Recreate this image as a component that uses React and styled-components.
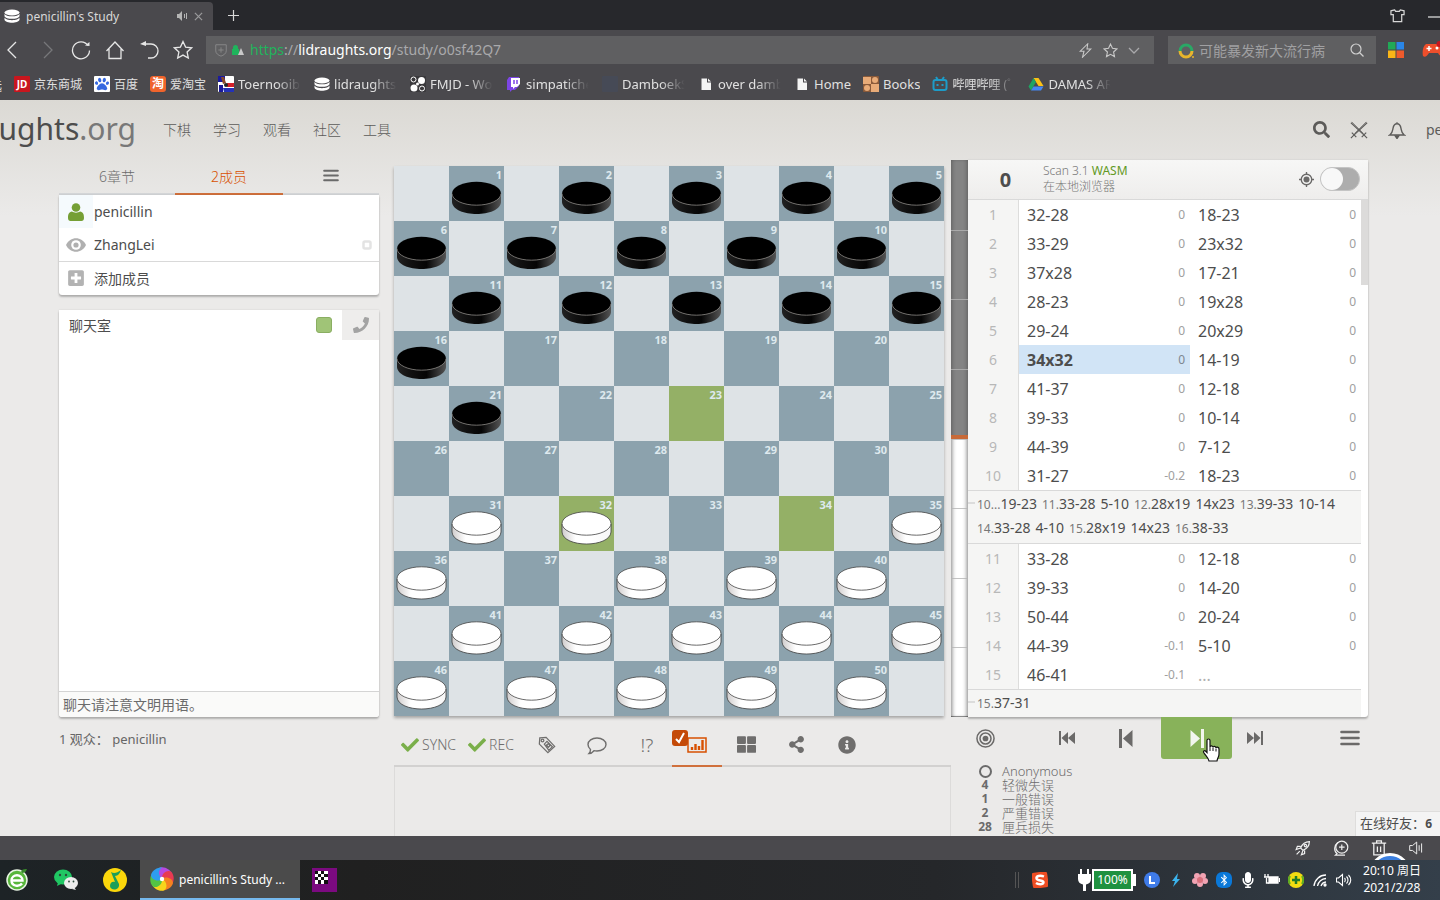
import React from 'react';
import { createGlobalStyle, styled } from 'styled-components';
import {
  FaBluetoothB,
  FaCheck,
  FaInfoCircle,
  FaMicrophone,
  FaPhone,
  FaPlusSquare,
  FaSearch,
  FaShareAlt,
  FaThLarge,
  FaPaw,
} from 'react-icons/fa';

const GlobalStyles = createGlobalStyle`
  * {
    box-sizing: border-box;
  }
  body {
    margin: 0;
    color: #4d4d4d;
    font-family: "Noto Sans", "Noto Sans CJK SC", sans-serif;
    font-size: 14px;
  }
  button {
    padding: 0;
    border: none;
    background: none;
    color: inherit;
    font: inherit;
    cursor: pointer;
  }
  input {
    font: inherit;
  }
  a {
    color: inherit;
    text-decoration: none;
  }
  svg {
    display: block;
    flex-shrink: 0;
  }
`;

const Desktop = styled.div`
  height: 100vh;
  display: flex;
  flex-direction: column;
  overflow: hidden;
`;

/* ---------- browser ---------- */

const TabStrip = styled.div`
  height: 30px;
  display: flex;
  align-items: center;
  flex-shrink: 0;
  background-color: #27282c;
  color: #d8d8d8;
`;

const BrowserTab = styled.div`
  width: 213px;
  height: 28px;
  margin-top: 2px;
  padding: 0 10px 0 4px;
  display: flex;
  align-items: center;
  gap: 6px;
  border-radius: 0 4px 0 0;
  background-color: #4a494d;
  font-size: 12px;
  .title {
    flex: 1;
  }
`;

const NewTab = styled.button`
  margin-left: 14px;
`;

const WindowButtons = styled.div`
  margin-left: auto;
  display: flex;
  align-items: center;
  gap: 20px;
`;

const Toolbar = styled.div`
  height: 40px;
  display: flex;
  align-items: center;
  flex-shrink: 0;
  background-color: #4a494d;
  color: #e6e6e6;
`;

const NavButtons = styled.div`
  padding: 0 13px 0 3px;
  display: flex;
  align-items: center;
  gap: 14px;
`;

const Address = styled.div`
  height: 28px;
  flex: 1;
  padding: 0 14px 0 8px;
  display: flex;
  align-items: center;
  gap: 4px;
  background-color: #5f5f61;
  color: #a9a9ab;
  .url {
    flex: 1;
    margin-left: 2px;
    padding-bottom: 2px;
  }
  .url ~ svg + svg {
    margin-left: 6px;
  }
  .scheme {
    color: #1fb45c;
  }
  .host {
    color: #fff;
  }
`;

const SearchBox = styled.label`
  width: 208px;
  height: 28px;
  margin: 0 12px 0 14px;
  padding: 0 12px 0 10px;
  display: flex;
  align-items: center;
  gap: 4px;
  background-color: #5f5f61;
  input {
    min-width: 0;
    flex: 1;
    padding: 0;
    border: none;
    outline: none;
    background: none;
    color: #fff;
    font-size: 14px;
  }
  input::placeholder {
    color: #a0a0a2;
    opacity: 1;
  }
`;

const Extensions = styled.div`
  width: 52px;
  display: flex;
  align-items: center;
  gap: 17px;
  overflow: hidden;
`;

const Bookmarks = styled.nav`
  height: 30px;
  padding-bottom: 2px;
  display: flex;
  align-items: center;
  flex-shrink: 0;
  gap: 12px;
  overflow: hidden;
  background-color: #4a494d;
  color: #e0e0e0;
  font-size: 13px;
`;

const Bookmark = styled.a`
  display: flex;
  align-items: center;
  flex-shrink: 0;
  gap: 4px;
  font-size: ${(props) => (props.$chinese ? 12 : 13)}px;
  span {
    max-width: 64px;
    overflow: hidden;
    white-space: nowrap;
    mask-image: ${(props) => (props.$fade ? 'linear-gradient(90deg, #000 60%, transparent 98%)' : 'none')};
  }
`;

const CutBookmark = styled.a`
  width: 2px;
  display: flex;
  justify-content: flex-end;
  flex-shrink: 0;
  overflow: hidden;
  white-space: nowrap;
`;

const StatusBar = styled.div`
  height: 24px;
  padding-right: 17px;
  position: relative;
  display: flex;
  align-items: center;
  justify-content: flex-end;
  flex-shrink: 0;
  gap: 22px;
  overflow: hidden;
  background-color: #4a494d;
  color: #f0f0f0;
`;

const FloatingBall = styled.div`
  width: 42px;
  height: 42px;
  position: absolute;
  top: 17px;
  right: 29px;
  border: 3px solid #fff;
  border-radius: 50%;
  background-color: #3b7fe0;
`;

/* ---------- site ---------- */

const Page = styled.div`
  min-height: 0;
  flex: 1;
  display: flex;
  flex-direction: column;
  position: relative;
  overflow: hidden;
  background: linear-gradient(#dbd9d4, #ebeae9 116px);
`;

const SiteHeader = styled.header`
  height: 60px;
  padding-bottom: 1px;
  display: flex;
  align-items: center;
  flex-shrink: 0;
  color: #5c5b59;
`;

const Brand = styled.a`
  width: 136px;
  margin-right: 27px;
  padding-bottom: 2px;
  display: flex;
  justify-content: flex-end;
  flex-shrink: 0;
  overflow: hidden;
  color: #4d4d4d;
  font-size: 30px;
  line-height: 44px;
  span {
    color: #787878;
  }
`;

const SiteNav = styled.nav`
  flex: 1;
  padding-bottom: 2px;
  display: flex;
  gap: 22px;
  font-weight: 300;
`;

const SiteTools = styled.div`
  width: 127px;
  display: flex;
  align-items: center;
  gap: 20px;
  overflow: hidden;
`;

const Main = styled.main`
  min-height: 0;
  flex: 1;
  padding: 0 72px 0 59px;
  display: grid;
  grid-template-columns: 335fr 557fr 417fr;
  grid-template-rows: auto minmax(0, 1fr);
`;

const Side = styled.aside`
  padding-right: 15px;
  display: flex;
  flex-direction: column;
`;

const SideTabs = styled.div`
  height: 35px;
  display: grid;
  grid-template-columns: 116fr 108fr 96fr;
`;

const SideTab = styled.button`
  padding-bottom: 2px;
  display: flex;
  align-items: center;
  justify-content: center;
  border-bottom: 2px solid ${(props) => (props.$active ? '#d0703c' : '#d4d6d8')};
  color: ${(props) => (props.$active ? '#d85000' : '#6a6a6a')};
  font-weight: 300;
`;

const Card = styled.section`
  border-radius: 0 0 3px 3px;
  background-color: #fff;
  box-shadow: 0 2px 2px rgba(0, 0, 0, 0.24), 0 0 2px rgba(0, 0, 0, 0.12);
`;

const Member = styled.div`
  height: 33px;
  padding-right: 7px;
  display: flex;
  align-items: center;
  color: #4d4d4d;
  .status {
    width: 34px;
    height: 33px;
    display: flex;
    align-items: center;
    justify-content: center;
    background-color: ${(props) => (props.$self ? '#f5fafd' : 'transparent')};
    color: ${(props) => (props.$self ? '#759f35' : '#b0b0b0')};
  }
  .name {
    flex: 1;
    margin-left: 1px;
  }
`;

const AddMember = styled.button`
  width: 100%;
  height: 34px;
  padding: 0 0 2px 8px;
  display: flex;
  align-items: center;
  gap: 9px;
  border-top: 1px solid #d9d9d9;
  svg {
    color: #b3b3b3;
  }
`;

const Chat = styled(Card)`
  flex: 1;
  margin-top: 15px;
  display: flex;
  flex-direction: column;
`;

const ChatHead = styled.div`
  height: 30px;
  padding-left: 10px;
  display: flex;
  align-items: center;
  label {
    flex: 1;
    display: flex;
    align-items: center;
    justify-content: space-between;
  }
  input {
    width: 16px;
    height: 16px;
    margin: 0 10px;
    appearance: none;
    border: 1px solid #8aae62;
    border-radius: 3px;
    background-color: #a0c477;
  }
`;

const VoiceButton = styled.button`
  width: 37px;
  height: 30px;
  display: flex;
  align-items: center;
  justify-content: center;
  background-color: #eeedec;
  color: #a3a3a3;
`;

const ChatInput = styled.input`
  width: 100%;
  height: 26px;
  margin-top: auto;
  padding: 0 4px;
  border: none;
  border-top: 1px solid #d4d4d4;
  border-radius: 0 0 3px 3px;
  outline: none;
  background-color: #fafaf9;
  &::placeholder {
    color: #6b6b6b;
    opacity: 1;
  }
`;

const BoardWrap = styled.div`
  padding: 6px 7px 1px 0;
`;

const Board = styled.div`
  aspect-ratio: 1;
  display: grid;
  grid-template-columns: repeat(10, 1fr);
  grid-template-rows: repeat(10, 1fr);
  box-shadow: 0 2px 3px rgba(0, 0, 0, 0.3);
`;

const Square = styled.div`
  min-height: 0;
  position: relative;
  background-color: ${(props) => (props.$last ? '#94b066' : props.$dark ? '#8ca2ad' : '#dee3e6')};
  .number {
    position: absolute;
    top: 2px;
    right: 2px;
    color: #dee9ee;
    font-size: 11px;
    font-weight: bold;
    line-height: 14px;
  }
`;

const Analysis = styled.div`
  min-width: 0;
  display: flex;
`;

const Gauge = styled.div`
  width: 17px;
  display: flex;
  flex-direction: column;
  position: relative;
  flex-shrink: 0;
  background-color: #fff;
  box-shadow: inset 3px 0 4px -2px rgba(0, 0, 0, 0.5), inset -3px 0 4px -2px rgba(0, 0, 0, 0.5), inset 0 -1px 0 #a0a0a0;
  .black {
    height: 50%;
    border-bottom: 4px solid #c86a38;
    background-color: rgba(80, 80, 80, 0.7);
  }
  .ticks {
    position: absolute;
    inset: 0;
    display: grid;
    grid-template-rows: repeat(8, 1fr);
  }
  .ticks i + i {
    border-top: 1px solid rgba(180, 180, 180, 0.8);
  }
`;

const Panel = styled.section`
  min-width: 0;
  flex: 1;
  background-color: #fff;
  border-radius: 0 0 3px 0;
  box-shadow: 0 2px 2px rgba(0, 0, 0, 0.24), 0 0 2px rgba(0, 0, 0, 0.12);
`;

const Engine = styled.div`
  height: 40px;
  padding-right: 8px;
  display: flex;
  align-items: center;
  border-bottom: 1px solid #d9d9d9;
  background: linear-gradient(#f7f7f6, #eeedec);
  .score {
    width: 75px;
    padding-bottom: 1px;
    text-align: center;
    font-size: 20px;
    font-weight: bold;
  }
  .name {
    flex: 1;
    padding-bottom: 2px;
    color: #787878;
    font-size: 12px;
    font-weight: 300;
    line-height: 16px;
  }
  .name b {
    color: #629924;
    font-weight: 400;
  }
`;

const Switch = styled.input`
  width: 40px;
  height: 24px;
  margin: 0 0 1px 6px;
  appearance: none;
  display: flex;
  border: 1px solid #c4c4c4;
  border-radius: 12px;
  background-color: #adadad;
  &::before {
    content: '';
    width: 22px;
    height: 22px;
    border-radius: 50%;
    background-color: #f8f8f8;
  }
`;

const MoveArea = styled.div`
  display: flex;
`;

const Scrollbar = styled.div`
  width: 7px;
  flex-shrink: 0;
  div {
    height: 85px;
    background-color: #dcdbda;
  }
`;

const Moves = styled.table`
  width: 100%;
  min-width: 0;
  flex: 1;
  table-layout: fixed;
  border-spacing: 0;
  col.index {
    width: 51px;
  }
  th {
    height: 29px;
    padding: 0;
    border-right: 1px solid #dddddc;
    background-color: #f5f5f4;
    color: #b8b8b8;
    font-weight: 400;
    text-align: center;
  }
  td {
    padding: 0;
  }
`;

const Move = styled.div`
  height: 29px;
  padding: 0 5px 0 8px;
  display: flex;
  align-items: center;
  justify-content: space-between;
  background-color: ${(props) => (props.$active ? '#d1e4f6' : 'transparent')};
  font-size: 16px;
  font-weight: ${(props) => (props.$active ? 700 : 400)};
  em {
    color: ${(props) => (props.$active ? '#7d8790' : '#a0a0a0')};
    font-size: 12px;
    font-style: normal;
    font-weight: 400;
  }
  &.empty {
    color: #b0b0b0;
  }
`;

const Variation = styled.div`
  padding: ${(props) => (props.$last ? '1px 9px 2px' : '1px 9px 3px')};
  display: flex;
  flex-wrap: wrap;
  column-gap: 5px;
  position: relative;
  border-top: 1px solid #d9d9d9;
  border-bottom: ${(props) => (props.$last ? 'none' : '1px solid #d9d9d9')};
  background-color: #f5f5f4;
  line-height: 24px;
  small {
    color: #787878;
    font-size: 12px;
    line-height: 16px;
  }
  &::before {
    content: '';
    width: 7px;
    position: absolute;
    top: 11px;
    left: 0;
    border-top: 2px solid #dcdcdc;
  }
`;

const Spectators = styled.div`
  padding-top: 12px;
  font-size: 13px;
  line-height: 20px;
  color: #666;
`;

const Under = styled.div`
  min-height: 0;
  padding-top: 7px;
  display: flex;
  flex-direction: column;
`;

const StudyTools = styled.div`
  height: 43px;
  padding-left: 7px;
  display: flex;
  flex-shrink: 0;
  border-bottom: 2px solid #d2d1d0;
  color: #6f6e6d;
`;

const SyncButton = styled.button`
  margin-right: ${(props) => props.$gap}px;
  display: flex;
  align-items: center;
  gap: 3px;
  font-weight: 300;
  svg {
    color: #7aaf4a;
  }
`;

const StudyTab = styled.button`
  width: 50px;
  margin-bottom: -2px;
  position: relative;
  display: flex;
  align-items: center;
  justify-content: center;
  border-bottom: 2px solid ${(props) => (props.$active ? '#d0703c' : 'transparent')};
  color: ${(props) => (props.$active ? '#d85000' : 'inherit')};
  font-size: 19px;
  font-weight: 300;
`;

const EvalBadge = styled.label`
  width: 16px;
  height: 16px;
  position: absolute;
  top: 6px;
  left: 0;
  display: grid;
  place-items: center;
  border-radius: 3px;
  background-color: #c44a08;
  color: #fff;
  input {
    width: 16px;
    height: 16px;
    margin: 0;
    grid-area: 1 / 1;
    appearance: none;
  }
  svg {
    grid-area: 1 / 1;
  }
`;

const UnderBox = styled.div`
  flex: 1;
  border-left: 1px solid #dcdbda;
  border-right: 1px solid #dcdbda;
`;

const ControlSide = styled.div`
  min-width: 0;
  padding-left: 17px;
`;

const Controls = styled.div`
  height: 42px;
  display: flex;
  align-items: stretch;
  justify-content: space-between;
  color: #6b6a69;
`;

const Jumps = styled.div`
  margin-right: 12px;
  display: flex;
`;

const ControlButton = styled.button`
  width: ${(props) => props.$width}px;
  position: relative;
  display: flex;
  align-items: center;
  justify-content: center;
  border-radius: 0 0 3px 3px;
  background-color: ${(props) => (props.$hover ? '#88b25a' : 'transparent')};
  color: ${(props) => (props.$hover ? '#f2f6ee' : 'inherit')};
`;

const Pointer = styled.svg`
  position: absolute;
  top: 21px;
  right: 12px;
`;

const Advice = styled.dl`
  margin: 5px 0 0;
  display: grid;
  grid-template-columns: 34px 1fr;
  color: #6b6b6b;
  font-size: 13px;
  line-height: 14px;
  dt {
    display: flex;
    align-items: center;
    justify-content: center;
    font-size: 12px;
    font-weight: bold;
  }
  dd {
    margin: 0;
    font-weight: 300;
  }
`;

const Friends = styled.button`
  height: 25px;
  padding: 0 8px 3px 4px;
  position: absolute;
  right: 0;
  bottom: 0;
  border: 1px solid #dedddc;
  border-width: 1px 0 0 1px;
  background-color: #f4f4f4;
  font-size: 13px;
  b {
    font-size: 12px;
  }
`;

/* ---------- taskbar ---------- */

const Taskbar = styled.footer`
  height: 40px;
  display: flex;
  align-items: center;
  flex-shrink: 0;
  background: linear-gradient(90deg, #1d2326, #202020 25%, #25272a 65%, #343f4a);
  color: #fff;
  font-size: 12px;
`;

const Pinned = styled.div`
  width: 140px;
  padding-left: 5px;
  display: flex;
  gap: 25px;
`;

const RunningApp = styled.button`
  width: 160px;
  height: 40px;
  margin-right: 12px;
  padding-left: 10px;
  display: flex;
  align-items: center;
  gap: 5px;
  border-bottom: 2px solid #76b9ed;
  background-color: #4b4b4b;
`;

const Tray = styled.div`
  margin-left: auto;
  padding-right: 16px;
  display: flex;
  align-items: center;
  gap: 8px;
  .grip {
    width: 4px;
    height: 16px;
    margin-right: 5px;
    border: 1px solid #555;
    border-width: 0 1px;
  }
`;

const Power = styled.div`
  margin-left: 21px;
  display: flex;
  align-items: center;
  .level {
    width: 41px;
    height: 22px;
    border: 2px solid #fff;
    background-color: #1f9140;
    line-height: 18px;
    text-align: center;
  }
  .cap {
    width: 3px;
    height: 12px;
    background-color: #fff;
  }
`;

const Clock = styled.time`
  width: 64px;
  padding-bottom: 2px;
  line-height: 17px;
  text-align: center;
`;

/* ---------- drawings ---------- */

const Line = ({ size = 20, view = 20, w = 1.3, children, ...rest }) => (
  <svg width={size} height={size} viewBox={`0 0 ${view} ${view}`} fill="none" stroke="currentColor" strokeWidth={w} {...rest}>
    {children}
  </svg>
);

const Stack = ({ size = 16 }) => (
  <svg width={size} height={size} viewBox="0 0 16 16" fill="#fff">
    <ellipse cx="8" cy="4.5" rx="7.5" ry="3" />
    <path d="M.5 5.8c1 3.4 14 3.4 15 0v2.4c-1 3.4-14 3.4-15 0z" />
    <path d="M.5 9.6c1 3.4 14 3.4 15 0v2.2c-1 4-14 4-15 0z" />
  </svg>
);

const STAR = 'M10 1.5l2.6 5.6 6 .7-4.500 4.200 1.200 6.100-5.300-3-5.300 3 1.200-6.100L1.400 7.800l6-.7z';

const Speaker = ({ size }) => (
  <Line size={size} w={1.4}>
    <path d="M1 6.500h4l6-5v17l-6-5H1z" />
    <path d="M14.500 6v8M18 3.500v13" />
  </Line>
);

const Bars = ({ width, height }) => (
  <svg width={width} height={height} viewBox="0 0 20 16" fill="none" stroke="currentColor" strokeWidth="2.600" strokeLinecap="round">
    <path d="M1.500 2h17M1.500 8h17M1.500 14h17" />
  </svg>
);

const Target = ({ size }) => (
  <Line size={size} w={1.6}>
    <circle cx="10" cy="10" r="9" />
    <circle cx="10" cy="10" r="5.800" />
    <circle cx="10" cy="10" r="3" fill="currentColor" stroke="none" />
  </Line>
);

const Badge = ({ color, radius = 1, children }) => (
  <svg width="16" height="16" viewBox="0 0 16 16">
    <rect width="16" height="16" rx={radius} fill={color} />
    {children}
  </svg>
);

const Document = () => (
  <svg width="16" height="16" viewBox="0 0 16 16" fill="#f4f4f4">
    <path d="M3.500 2.500h5.500v4h4v7.500h-9.500zM10 2.500l3 3h-3z" />
  </svg>
);

const bookmarks = [
  {
    title: '京东商城',
    chinese: true,
    icon: (
      <Badge color="#c8161e">
        <text x="8" y="12" fill="#fff" fontSize="10" fontWeight="bold" textAnchor="middle">JD</text>
      </Badge>
    ),
  },
  {
    title: '百度',
    chinese: true,
    icon: (
      <Badge color="#fff">
        <FaPaw x="1" y="1" size="14" color="#3668e0" />
      </Badge>
    ),
  },
  {
    title: '爱淘宝',
    chinese: true,
    icon: (
      <Badge color="#f0642c" radius={3}>
        <text x="8" y="12" fill="#fff" fontSize="12" fontWeight="bold" textAnchor="middle">淘</text>
      </Badge>
    ),
  },
  {
    title: 'Toernooibase',
    fade: true,
    icon: (
      <Badge color="#fff">
        <path d="M0 0h7v6H0zM1 9h4v7H1z" fill="#1b1a9c" />
        <path d="M3 1h3l2 6-3 1z" fill="#8a4a2a" />
        <path d="M9 7h7v4H9z" fill="#d3202a" />
        <path d="M5 12h11v4H6z" fill="#2432b8" />
        <circle cx="8" cy="9" r="2" fill="#222" />
      </Badge>
    ),
  },
  { title: 'lidraughts.org', fade: true, icon: <Stack /> },
  {
    title: 'FMJD - World',
    fade: true,
    icon: (
      <Badge color="#3a393c">
        <circle cx="3.500" cy="3.500" r="2.500" fill="none" stroke="#fff" />
        <circle cx="11.500" cy="4.500" r="3.500" fill="#fff" />
        <circle cx="4" cy="12" r="3.500" fill="#fff" />
        <circle cx="12" cy="12.500" r="2.500" fill="none" stroke="#fff" />
        <circle cx="7.500" cy="8" r="1.500" fill="#fff" />
      </Badge>
    ),
  },
  {
    title: 'simpatichess',
    fade: true,
    icon: (
      <svg width="16" height="16" viewBox="0 0 16 16">
        <path d="M3 1h10v9l-4 4H6l-2 2v-2H1V4z" fill="#7d45e6" />
        <path d="M5 2h9v6l-3 3H9l-2 2v-2H5z" fill="#fff" />
        <path d="M8 4v4M11 4v4" stroke="#7d45e6" strokeWidth="1.500" />
      </svg>
    ),
  },
  { title: 'DamboekSite', fade: true, icon: <Badge color="#464a56" /> },
  { title: 'over dambord', fade: true, icon: <Document /> },
  { title: 'Home', icon: <Document /> },
  {
    title: 'Books',
    icon: (
      <Badge color="#8a5a3a">
        <path d="M0 1h8v7H0zM8 8h8v8H8z" fill="#e8ab78" />
        <circle cx="12" cy="4" r="3" fill="#e8ab78" />
        <circle cx="4" cy="12" r="3" fill="#e8ab78" />
      </Badge>
    ),
  },
  {
    title: '哔哩哔哩 (゜',
    chinese: true,
    fade: true,
    icon: (
      <Line size={16} view={16} w={2} color="#1d9cc8">
        <rect x="1.500" y="4" width="13" height="10" rx="2" />
        <path d="M4 1l2 3M12 1l-2 3M5.500 8v2M10.500 8v2" />
      </Line>
    ),
  },
  {
    title: 'DAMAS ARG',
    fade: true,
    icon: (
      <svg width="16" height="16" viewBox="0 0 16 16">
        <path d="M5.500 2h5l5 8h-5z" fill="#fbc116" />
        <path d="M5.500 2L.5 10.500 3 14.500 8 6z" fill="#1fa463" />
        <path d="M5.500 10.500h10l-2.500 4H3z" fill="#4487f4" />
      </svg>
    ),
  },
];

const BLACK = [1, 2, 3, 4, 5, 6, 7, 8, 9, 10, 11, 12, 13, 14, 15, 16, 21];
const WHITE = [31, 32, 35, 36, 38, 39, 40, 41, 42, 43, 44, 45, 46, 47, 48, 49, 50];
const LAST = [23, 32, 34];

const squares = Array.from({ length: 100 }, (_, i) => {
  const row = Math.floor(i / 10);
  const col = i % 10;
  const dark = (row + col) % 2 === 1;
  return { dark, number: dark ? row * 5 + Math.floor(col / 2) + 1 : null };
});

const Piece = ({ white }) => (
  <svg width="100%" height="100%" viewBox="0 0 55 55">
    <defs>
      <linearGradient id={white ? 'whiteSide' : 'blackSide'}>
        <stop offset="0" stopColor={white ? '#cfcccc' : '#222'} />
        <stop offset=".28" stopColor={white ? '#fff' : '#111'} />
        <stop offset=".6" stopColor={white ? '#fff' : '#050505'} />
        <stop offset="1" stopColor={white ? '#f6f6f6' : '#555'} />
      </linearGradient>
    </defs>
    <path
      d="M3 28v8c1 16 48 16 49 0v-8z"
      fill={white ? 'url(#whiteSide)' : 'url(#blackSide)'}
      stroke={white ? '#3c3c3c' : 'none'}
      strokeWidth=".8"
    />
    <ellipse cx="27.500" cy="27.500" rx="24.500" ry="11.700" fill={white ? '#fff' : '#000'} />
    <path
      d="M3 27.500a24.500 11.700 0 0 0 49 0"
      fill="none"
      stroke={white ? '#444' : '#8d8a86'}
      strokeWidth=".8"
    />
    {white && <path d="M3 27.500a24.500 11.700 0 0 1 49 0" fill="none" stroke="#444" strokeWidth=".8" />}
  </svg>
);

const firstMoves = [
  [1, '32-28', '0', '18-23', '0'],
  [2, '33-29', '0', '23x32', '0'],
  [3, '37x28', '0', '17-21', '0'],
  [4, '28-23', '0', '19x28', '0'],
  [5, '29-24', '0', '20x29', '0'],
  [6, '34x32', '0', '14-19', '0'],
  [7, '41-37', '0', '12-18', '0'],
  [8, '39-33', '0', '10-14', '0'],
  [9, '44-39', '0', '7-12', '0'],
  [10, '31-27', '-0.2', '18-23', '0'],
];

const nextMoves = [
  [11, '33-28', '0', '12-18', '0'],
  [12, '39-33', '0', '14-20', '0'],
  [13, '50-44', '0', '20-24', '0'],
  [14, '44-39', '-0.1', '5-10', '0'],
  [15, '46-41', '-0.1', '...', ''],
];

const variation = [
  ['10...', '19-23'],
  ['11.', '33-28'],
  ['', '5-10'],
  ['12.', '28x19'],
  ['', '14x23'],
  ['13.', '39-33'],
  ['', '10-14'],
  ['14.', '33-28'],
  ['', '4-10'],
  ['15.', '28x19'],
  ['', '14x23'],
  ['16.', '38-33'],
];

const MoveRow = ({ row: [index, white, whiteEval, black, blackEval] }) => (
  <tr>
    <th scope="row">{index}</th>
    <td>
      <Move $active={index === 6}>
        {white}
        <em>{whiteEval}</em>
      </Move>
    </td>
    <td>
      <Move className={black === '...' ? 'empty' : undefined}>
        {black}
        <em>{blackEval}</em>
      </Move>
    </td>
  </tr>
);

const VariationRow = ({ moves, last }) => (
  <tr>
    <td colSpan="3">
      <Variation $last={last}>
        {moves.map(([index, move], i) => (
          <span key={i}>
            {index && <small>{index}</small>}
            {move}
          </span>
        ))}
      </Variation>
    </td>
  </tr>
);

const Browser = () => (
  <>
    <TabStrip>
      <BrowserTab>
        <Stack />
        <span className="title">penicillin's Study</span>
        <svg width="12" height="12" viewBox="0 0 12 12" fill="#b5b5b5">
          <path d="M1 4h2l3-3v10L3 8H1zM8 4h1v4H8zM10 3h1v6h-1z" />
        </svg>
        <Line size={9} view={10} w={1.4} color="#99999b">
          <path d="M1 1l8 8M9 1l-8 8" />
        </Line>
      </BrowserTab>
      <NewTab aria-label="新标签页">
        <Line size={13} view={13} w={1.2}>
          <path d="M6.500 1v11M1 6.500h11" />
        </Line>
      </NewTab>
      <WindowButtons>
        <button aria-label="皮肤">
          <Line size={15} view={16}>
            <path d="M5 2L1 3v4h2.500v7.500h9V7H15V3l-4-1-1 1.500H6z" />
          </Line>
        </button>
        <button aria-label="最小化">
          <Line size={15} view={15}>
            <path d="M3 9h12" />
          </Line>
        </button>
      </WindowButtons>
    </TabStrip>
    <Toolbar>
      <NavButtons>
        <button aria-label="后退">
          <Line><path d="M13 2l-8 8 8 8" /></Line>
        </button>
        <button aria-label="前进">
          <Line color="#77777a"><path d="M7 2l8 8-8 8" /></Line>
        </button>
        <button aria-label="刷新">
          <Line>
            <path d="M17 5.500a8.500 8.500 0 1 0 1.500 5" />
            <path d="M14 5.500l4.500.500V2z" fill="currentColor" stroke="none" />
          </Line>
        </button>
        <button aria-label="主页">
          <Line><path d="M1.500 11L10 2l8.500 9M4 9v9.500h12V9" /></Line>
        </button>
        <button aria-label="恢复">
          <Line>
            <path d="M4 4h8a7 7 0 0 1 0 14H9" />
            <path d="M1 4l6-3v5z" fill="currentColor" stroke="none" />
          </Line>
        </button>
        <button aria-label="收藏">
          <Line><path d={STAR} /></Line>
        </button>
      </NavButtons>
      <Address>
        <Line size={14} view={16} w={1} color="#8b8b8d">
          <path d="M2 2h12v7c0 3-3 5-6 6-3-1-6-3-6-6zM8 5v6M5 8h6" />
        </Line>
        <svg width="12" height="12" viewBox="0 0 12 12">
          <path d="M1 5V3.500a2.500 2.500 0 0 1 5 0V5h1v6H0V5z" fill="#1fb45c" />
          <path d="M9 4l3 7H6z" fill="#c9c9c9" />
        </svg>
        <div className="url">
          <span className="scheme">https</span>://<span className="host">lidraughts.org</span>/study/o0sf42Q7
        </div>
        <Line size={15} w={1.4} color="#c9c9c9">
          <path d="M13 1L3 11h5l-2 8 11-11h-5z" />
        </Line>
        <Line size={15} w={1.5} color="#c9c9c9">
          <path d={STAR} />
        </Line>
        <Line size={12} view={12} color="#a9a9ab">
          <path d="M1 4l5 5 5-5" />
        </Line>
      </Address>
      <SearchBox>
        <svg width="17" height="17" viewBox="0 0 17 17" fill="none" strokeWidth="3">
          <path d="M2 9a6 6 0 0 1 12 0" stroke="#2aa866" />
          <path d="M2 9a6 6 0 0 0 12 0" stroke="#e8b52c" />
          <circle cx="15" cy="15" r="1" fill="#e8b52c" stroke="none" />
        </svg>
        <input type="text" aria-label="搜索" placeholder="可能暴发新大流行病" />
        <Line size={14} view={14} w={1.2} color="#d0d0d0">
          <circle cx="6" cy="6" r="5" />
          <path d="M9.500 9.500L13.500 13.500" />
        </Line>
      </SearchBox>
      <Extensions>
        <svg width="16" height="16" viewBox="0 0 16 16">
          <path d="M0 0h7.500v7.500H0z" fill="#21a957" />
          <path d="M8.500 0H16v7.500H8.500z" fill="#2a86e8" />
          <path d="M0 8.500h7.500V16H0z" fill="#fbb517" />
          <path d="M8.500 8.500H16V16H8.500z" fill="#ee5a2c" />
        </svg>
        <svg width="24" height="18" viewBox="0 0 24 18">
          <path d="M5 3h14c3 2 4 8 4 12-2 2-4 0-6-3H8c-2 3-4 5-6 3-1-4 0-10 3-12z" fill="#ee4f2c" />
          <path d="M8 5v5M5.500 7.500h5" stroke="#fff" strokeWidth="1.500" />
          <circle cx="16" cy="7" r="1.500" fill="#fff" />
          <circle cx="18.500" cy="3" r="3" fill="#c8161e" />
        </svg>
      </Extensions>
    </Toolbar>
    <Bookmarks aria-label="书签">
      <CutBookmark href="#">优选</CutBookmark>
      {bookmarks.map((item) => (
        <Bookmark key={item.title} href="#" $fade={item.fade} $chinese={item.chinese}>
          {item.icon}
          <span>{item.title}</span>
        </Bookmark>
      ))}
    </Bookmarks>
  </>
);

const Header = () => (
  <SiteHeader>
    <Brand href="#">
      lidraughts<span>.org</span>
    </Brand>
    <SiteNav>
      {['下棋', '学习', '观看', '社区', '工具'].map((item) => (
        <a key={item} href="#">{item}</a>
      ))}
    </SiteNav>
    <SiteTools>
      <button aria-label="搜索"><FaSearch size={17} /></button>
      <button aria-label="挑战">
        <Line size={18}>
          <path d="M1 2l15 14M19 2L4 16M2 13l5 5M18 13l-5 5M4 16l-3 3M16 16l3 3" />
          <path d="M2 1l13 13M18 1L5 14" strokeWidth="0.800" />
        </Line>
      </button>
      <button aria-label="通知">
        <Line size={18} w={1.500}>
          <path d="M10 1.500v1.500M2 15.500h16c-3-2-3-4-3.500-7C14 5 12.500 3 10 3S6 5 5.500 8.500C5 11.500 5 13.500 2 15.500z" />
          <path d="M8 16.500h4l-2 3z" fill="currentColor" />
        </Line>
      </button>
      <a href="#">penicillin</a>
    </SiteTools>
  </SiteHeader>
);

const SidePanel = () => (
  <Side>
    <SideTabs>
      <SideTab>6章节</SideTab>
      <SideTab $active>2成员</SideTab>
      <SideTab aria-label="菜单"><Bars width={16} height={13} /></SideTab>
    </SideTabs>
    <Card>
      <Member $self>
        <span className="status">
          <svg width="16" height="18" viewBox="0 0 16 18" fill="currentColor">
            <circle cx="8" cy="4.500" r="4.300" />
            <path d="M0 15c0-4 1-6 4-6.500 2 1.500 6 1.500 8 0 3 .500 4 2.500 4 6.500 0 2-1 3-2.500 3h-11C1 18 0 17 0 15z" />
          </svg>
        </span>
        <a className="name" href="#">penicillin</a>
      </Member>
      <Member>
        <span className="status">
          <svg width="20" height="14" viewBox="0 0 20 14">
            <path d="M0 7c4-9 16-9 20 0-4 9-16 9-20 0z" fill="currentColor" />
            <circle cx="10" cy="7" r="4.800" fill="#fff" />
            <circle cx="10" cy="7" r="2.600" fill="currentColor" />
          </svg>
        </span>
        <a className="name" href="#">ZhangLei</a>
        <button aria-label="成员设置">
          <Line size={10} view={10} w={2.500} color="#e3e3e3">
            <rect x="1.500" y="1.500" width="7" height="7" rx="1.500" />
          </Line>
        </button>
      </Member>
      <AddMember>
        <FaPlusSquare size={18} />
        添加成员
      </AddMember>
    </Card>
    <Chat>
      <ChatHead>
        <label>
          聊天室
          <input type="checkbox" defaultChecked />
        </label>
        <VoiceButton aria-label="语音聊天"><FaPhone size={16} /></VoiceButton>
      </ChatHead>
      <ChatInput type="text" aria-label="聊天室" placeholder="聊天请注意文明用语。" />
    </Chat>
  </Side>
);

const GameBoard = () => (
  <BoardWrap>
    <Board>
      {squares.map(({ dark, number }, i) => (
        <Square key={i} $dark={dark} $last={LAST.includes(number)}>
          {BLACK.includes(number) && <Piece />}
          {WHITE.includes(number) && <Piece white />}
          {dark && <span className="number">{number}</span>}
        </Square>
      ))}
    </Board>
  </BoardWrap>
);

const MoveList = () => (
  <Analysis>
    <Gauge>
      <div className="black" />
      <div className="ticks">
        {squares.slice(0, 8).map((_, i) => <i key={i} />)}
      </div>
    </Gauge>
    <Panel>
      <Engine>
        <div className="score">0</div>
        <div className="name">
          Scan 3.1 <b>WASM</b>
          <br />
          在本地浏览器
        </div>
        <button aria-label="显示威胁">
          <Line size={15} w={1.800} color="#6b6a69">
            <circle cx="10" cy="10" r="7" />
            <circle cx="10" cy="10" r="4" fill="currentColor" stroke="none" />
            <path d="M10 0v4M10 16v4M0 10h4M16 10h4" />
          </Line>
        </button>
        <Switch type="checkbox" role="switch" aria-label="本地分析" />
      </Engine>
      <MoveArea>
        <Moves>
          <colgroup>
            <col className="index" />
            <col />
            <col />
          </colgroup>
          <tbody>
            {firstMoves.map((row) => <MoveRow key={row[0]} row={row} />)}
            <VariationRow moves={variation} />
            {nextMoves.map((row) => <MoveRow key={row[0]} row={row} />)}
            <VariationRow moves={[['15.', '37-31']]} last />
          </tbody>
        </Moves>
        <Scrollbar><div /></Scrollbar>
      </MoveArea>
    </Panel>
  </Analysis>
);

const Underboard = () => (
  <Under>
    <StudyTools>
      <SyncButton $gap={12}><FaCheck size={18} />SYNC</SyncButton>
      <SyncButton $gap={8}><FaCheck size={18} />REC</SyncButton>
      <StudyTab aria-label="标签">
        <Line size={18} w={1.400}>
          <path d="M2 2l7-.500 9.500 10-7.500 7L1.500 9z" />
          <circle cx="5" cy="5" r="1.500" />
          <path d="M7 9l3-3 6 6-4 4zM9.500 10l2-1.500 2 2-2 2z" />
        </Line>
      </StudyTab>
      <StudyTab aria-label="评论">
        <Line size={20} w={1.400}>
          <path d="M10 3c5 0 9 2.800 9 6.500S15 16 10 16c-1 0-2 0-3-.300C5.500 17.500 4 18.500 2 18.500c1-1 1.500-2.300 1.500-4C2 13.200 1 11.500 1 9.500 1 5.800 5 3 10 3z" />
        </Line>
      </StudyTab>
      <StudyTab>!?</StudyTab>
      <StudyTab as="div" $active>
        <EvalBadge>
          <input type="checkbox" defaultChecked aria-label="电脑分析" />
          <Line size={12} view={12} w={2}>
            <path d="M2 7l3 3 5-9" />
          </Line>
        </EvalBadge>
        <button aria-label="电脑分析">
          <Line size={20} w={1.500}>
            <path d="M1 3h18v14H1z" />
            <path d="M5 15v-3M8.500 15V9M12 15v-4M15.500 15V5" strokeWidth="2.400" />
          </Line>
        </button>
      </StudyTab>
      <StudyTab aria-label="多棋盘"><FaThLarge size={19} /></StudyTab>
      <StudyTab aria-label="分享"><FaShareAlt size={17} /></StudyTab>
      <StudyTab aria-label="帮助"><FaInfoCircle size={18} /></StudyTab>
    </StudyTools>
    <UnderBox />
  </Under>
);

const GameControls = () => (
  <ControlSide>
    <Controls>
      <ControlButton $width={34} aria-label="开局浏览器"><Target size={19} /></ControlButton>
      <Jumps>
        <ControlButton $width={46} aria-label="第一步">
          <svg width="16" height="14" viewBox="0 0 16 14" fill="currentColor">
            <path d="M0 0h2v14H0zM9 1v12L2.500 7zM16 1v12L9 7z" />
          </svg>
        </ControlButton>
        <ControlButton $width={71} aria-label="上一步">
          <svg width="14" height="19" viewBox="0 0 14 19" fill="currentColor">
            <path d="M0 0h3v19H0zM13.500 1v17L4 9.500z" />
          </svg>
        </ControlButton>
        <ControlButton $width={71} $hover aria-label="下一步">
          <svg width="14" height="19" viewBox="0 0 14 19" fill="currentColor">
            <path d="M11 0h3v19h-3zM.5 1v17L10 9.500z" />
          </svg>
          <Pointer width="18" height="24" viewBox="0 0 18 24">
            <path
              d="M5 2.500c0-2 3-2 3 0V9c0-1.500 3-1.500 3 .500 0-1.500 3-1.500 3 .500 0-1.500 3-1 3 1v5c0 3-1.500 4-2 7H7c-.5-3-3-5-5-8-1.500-2 .5-3 2-1.500l1 1z"
              fill="#fff"
              stroke="#111"
              strokeWidth="1.200"
            />
            <path d="M8 9v4M11 10v3M14 10.500v3" stroke="#111" />
          </Pointer>
        </ControlButton>
        <ControlButton $width={46} aria-label="最后一步">
          <svg width="16" height="14" viewBox="0 0 16 14" fill="currentColor">
            <path d="M14 0h2v14h-2zM7 1v12l6.500-6zM0 1v12l7-6z" />
          </svg>
        </ControlButton>
      </Jumps>
      <ControlButton $width={36} aria-label="菜单"><Bars width={20} height={16} /></ControlButton>
    </Controls>
    <Advice>
      <dt>
        <Line size={13} view={13} w={2}><circle cx="6.500" cy="6.500" r="5.500" /></Line>
      </dt>
      <dd>Anonymous</dd>
      <dt>4</dt>
      <dd>轻微失误</dd>
      <dt>1</dt>
      <dd>一般错误</dd>
      <dt>2</dt>
      <dd>严重错误</dd>
      <dt>28</dt>
      <dd>厘兵损失</dd>
    </Advice>
  </ControlSide>
);

const WindowsTaskbar = () => (
  <Taskbar>
    <Pinned>
      <button aria-label="360浏览器">
        <svg width="24" height="24" viewBox="0 0 24 24">
          <circle cx="12" cy="12" r="10" fill="#58b63c" stroke="#e9f5e4" strokeWidth="1.500" />
          <path d="M6.500 12.500h11c0-7-11-7-11 0 0 6 8 6.500 10.500 3" fill="none" stroke="#fff" strokeWidth="2.400" />
          <path d="M16 3c2-2 4-2 6-2-1 3-3 4-5 4z" fill="#38862b" />
        </svg>
      </button>
      <button aria-label="微信">
        <svg width="24" height="24" viewBox="0 0 24 24">
          <ellipse cx="9" cy="9" rx="9" ry="7.500" fill="#20c763" />
          <path d="M4 14l-1 4 4-2z" fill="#20c763" />
          <ellipse cx="17" cy="15" rx="7" ry="6" fill="#ededed" />
          <path d="M20 19l2 3-4-1z" fill="#ededed" />
          <g fill="#2c4a3a">
            <circle cx="6" cy="7" r="1.200" />
            <circle cx="12" cy="7" r="1.200" />
            <circle cx="15" cy="13.500" r=".9" />
            <circle cx="19.500" cy="13.500" r=".9" />
          </g>
        </svg>
      </button>
      <button aria-label="QQ音乐">
        <svg width="24" height="24" viewBox="0 0 24 24">
          <circle cx="12" cy="12" r="12" fill="#fbd70b" />
          <path d="M8 4c3 2 6 1 10-2-1 3-3 6-6 6l4 8c1 7-9 7-9 2 0-4 3-5 5-4z" fill="#1c9e5a" />
        </svg>
      </button>
    </Pinned>
    <RunningApp>
      <svg width="24" height="24" viewBox="0 0 24 24">
        {['#b64ae0', '#e83a52', '#f58220', '#f7d51c', '#53c443', '#2f9df0'].map((color, i) => (
          <path key={color} d="M12 12C7 10 6 3 10 .500c5-1.500 10 2 12 6-4-2-8-1-10 5.500z" fill={color} transform={`rotate(${i * 60} 12 12)`} />
        ))}
        <circle cx="12" cy="12" r="2.200" fill="#fff" />
      </svg>
      penicillin's Study ...
    </RunningApp>
    <button aria-label="跳棋">
      <svg width="25" height="24" viewBox="0 0 25 24">
        <path d="M0 0h25v24H0z" fill="#7b0a80" />
        <path d="M3 3h13v13H3z" fill="#fff" />
        <path
          d="M3 3h3v3H3zM9 3h3v3H9zM6 6h3v3H6zM12 6h4v3h-4zM3 9h3v3H3zM9 9h3v3H9zM6 12h3v4H6zM12 12h4v4h-4z"
          fill="#111"
        />
      </svg>
    </button>
    <Tray>
      <div className="grip" />
      <svg width="16" height="16" viewBox="0 0 16 16">
        <rect width="16" height="16" rx="3" fill="#ee4d23" transform="rotate(-8 8 8)" />
        <path d="M12 4.500C8 3 4 4 4.500 6.500S12 8 11.500 10.500 6 12.500 4 11" fill="none" stroke="#fff" strokeWidth="2.400" />
      </svg>
      <Power>
        <svg width="15" height="22" viewBox="0 0 15 22" fill="#fff">
          <path d="M3 0h2v5h5V0h2v5h2v5c0 3-2 5-5 5.500V22H6v-6.500C3 15 1 13 1 10V5h2z" />
        </svg>
        <div className="level">100%</div>
        <div className="cap" />
      </Power>
      <svg width="16" height="16" viewBox="0 0 16 16">
        <circle cx="8" cy="8" r="8" fill="#3f7be8" />
        <path d="M6 4v7h5" fill="none" stroke="#fff" strokeWidth="2" />
      </svg>
      <svg width="16" height="16" viewBox="0 0 16 16" fill="#3bb4ee">
        <path d="M10 1L4 9h3l-2 6 7-8H9z" />
      </svg>
      <svg width="16" height="16" viewBox="0 0 16 16" fill="#f2a3b3">
        <circle cx="5" cy="4" r="3" />
        <circle cx="11" cy="4" r="3" />
        <circle cx="13" cy="9" r="3" />
        <circle cx="8" cy="12" r="3" />
        <circle cx="3" cy="9" r="3" />
        <circle cx="8" cy="8" r="3" fill="#d9707c" />
      </svg>
      <Badge color="#0a78d8" radius={6}>
        <FaBluetoothB x="2" y="2" size="12" color="#fff" />
      </Badge>
      <FaMicrophone size={16} />
      <Line size={16} view={16}>
        <path d="M5 5h9v6H5z" fill="currentColor" />
        <path d="M15.500 6v4M1 2v3M4 2v3M0 5h5M2.500 6v5H5" />
      </Line>
      <svg width="16" height="16" viewBox="0 0 16 16">
        <circle cx="8" cy="8" r="8" fill="#f2dc12" />
        <path d="M2 12a8 8 0 0 1 0-8M14 4a8 8 0 0 1 0 8" stroke="#5fae22" strokeWidth="2" fill="none" />
        <path d="M8 4v8M4 8h8" stroke="#1f7a28" strokeWidth="2.500" />
      </svg>
      <Line size={16} view={16}>
        <path d="M2 14A12 12 0 0 1 14 3M5.500 14A9 9 0 0 1 14 6.500M9 14a6 6 0 0 1 5-4" />
        <circle cx="13" cy="13" r="1" fill="currentColor" />
      </Line>
      <Line size={16} view={16} w={1.100}>
        <path d="M0.500 6h2l4-3.500v11L2.500 10h-2zM8.500 6c1 1 1 3 0 4M10.500 4.500c2 2 2 5 0 7M12.500 3c3 3 3 7 0 10" />
      </Line>
      <Clock>
        20:10 周日
        <br />
        2021/2/28
      </Clock>
    </Tray>
  </Taskbar>
);

const App = () => {
  return (
    <>
      <GlobalStyles />
      <Desktop>
        <Browser />
        <Page>
          <Header />
          <Main>
            <SidePanel />
            <GameBoard />
            <MoveList />
            <Spectators>
              1 观众： <a href="#">penicillin</a>
            </Spectators>
            <Underboard />
            <GameControls />
          </Main>
          <Friends>
            在线好友：<b>6</b>
          </Friends>
        </Page>
        <StatusBar>
          <button aria-label="加速">
            <Line size={16} w={1.500}>
              <path d="M18 2c-6 0-9 3-11 8l3 3c5-2 8-5 8-11zM7 8H3l-1.500 4L7 10M12 13v4l-4 1.500L10 13M2 18l4-4" />
              <circle cx="13" cy="7" r="1.500" />
            </Line>
          </button>
          <button aria-label="新建窗口">
            <Line size={16} w={1.500}>
              <circle cx="11" cy="9" r="7.500" />
              <path d="M11 5.500v7M7.500 9h7M6 3C1 7 1 14 5 17l-2 2h12" />
            </Line>
          </button>
          <button aria-label="清理">
            <Line size={16} w={1.600}>
              <path d="M1 4h18M7 4V1h6v3M3.500 4v14.500h13V4M8 8v7M12 8v7" />
            </Line>
          </button>
          <button aria-label="声音"><Speaker size={14} /></button>
          <FloatingBall />
        </StatusBar>
        <WindowsTaskbar />
      </Desktop>
    </>
  );
};

export default App;
